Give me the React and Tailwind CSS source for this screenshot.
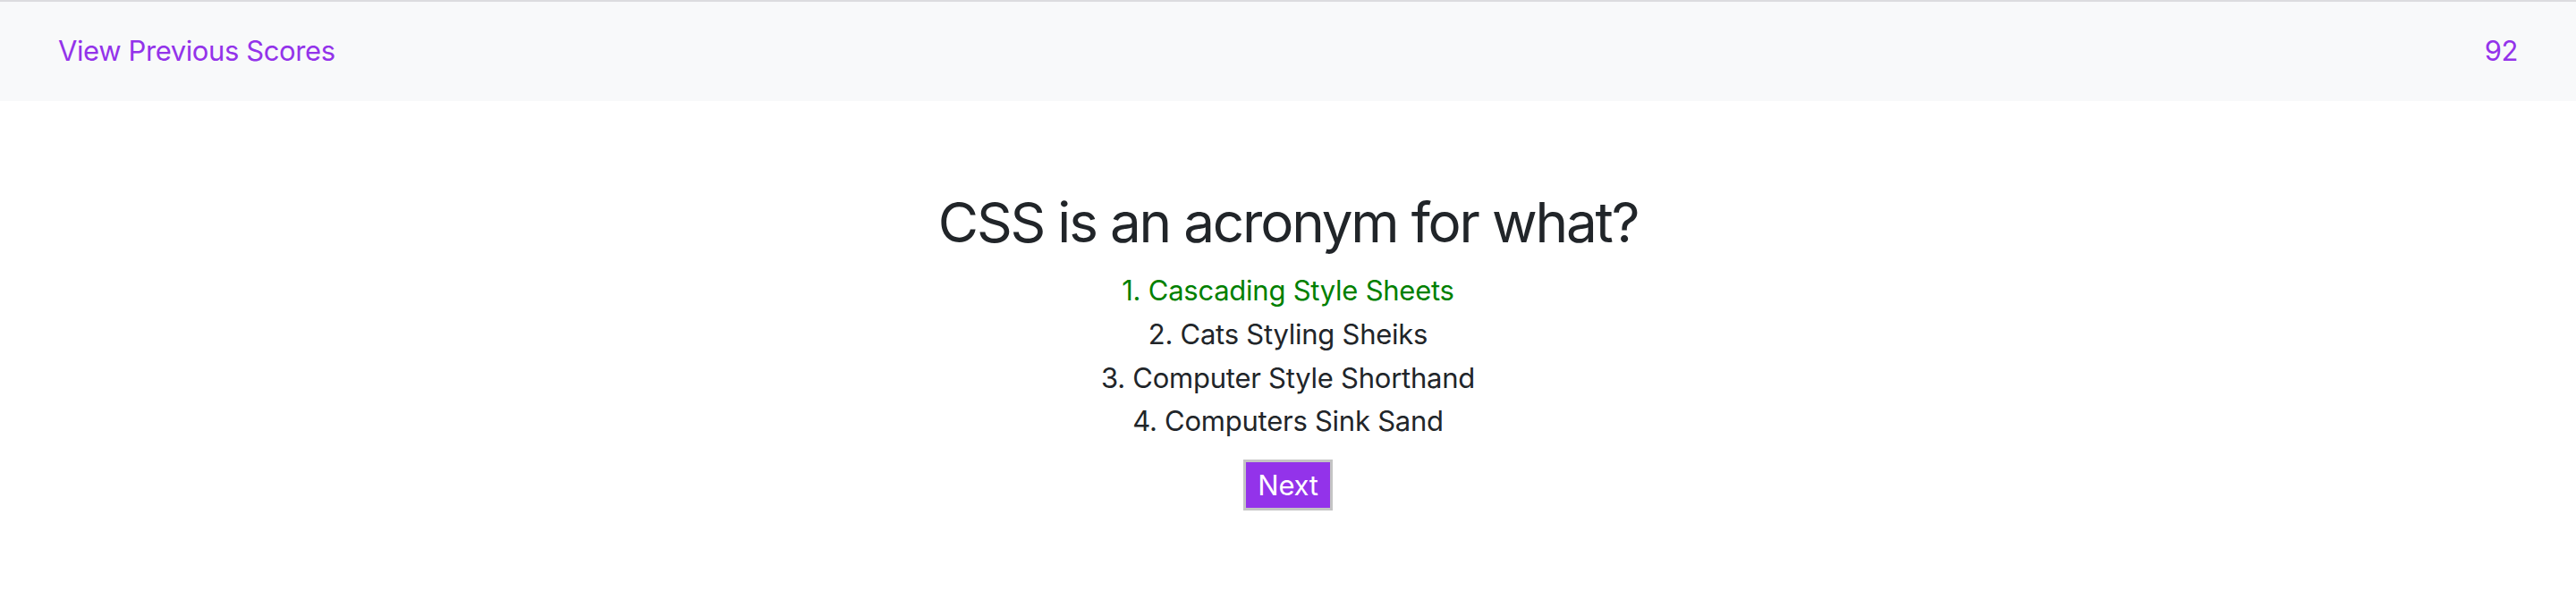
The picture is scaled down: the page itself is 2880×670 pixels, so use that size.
export default function App() {
  const answers = [
    { n: 1, t: "Cascading Style Sheets", ok: true },
    { n: 2, t: "Cats Styling Sheiks" },
    { n: 3, t: "Computer Style Shorthand" },
    { n: 4, t: "Computers Sink Sand" },
  ];
  return (
    <div className="min-h-[670px] bg-white" style={{ fontFamily: "Inter, 'Liberation Sans', sans-serif" }}>
      <div className="border-t-2 border-[#dcdcdf]"></div>
      <header className="h-[111px] bg-[#f8f9fa] px-[65px] flex items-center justify-between text-[31px] tracking-[-0.4px] text-[#9333ea]">
        <a className="cursor-pointer">View Previous Scores</a>
        <span>92</span>
      </header>
      <main className="flex flex-col items-center pt-[99px]">
        <h1 className="text-[62px] leading-[1.2] tracking-[-2.2px] text-[#212529] font-normal">CSS is an acronym for what?</h1>
        <ol className="mt-[15px] flex flex-col items-center text-[31px] leading-[48.6px] tracking-[-0.25px] text-[#212529]">
          {answers.map((a) => (
            <li key={a.n} className={a.ok ? "text-[#008000]" : ""}>
              {a.n}. {a.t}
            </li>
          ))}
        </ol>
        <button className="mt-[18px] w-[100px] h-[57px] bg-[#9333ea] border-[3px] border-[#c4c4c4] text-white text-[31px] tracking-[-0.25px] leading-none">
          Next
        </button>
      </main>
    </div>
  );
}
